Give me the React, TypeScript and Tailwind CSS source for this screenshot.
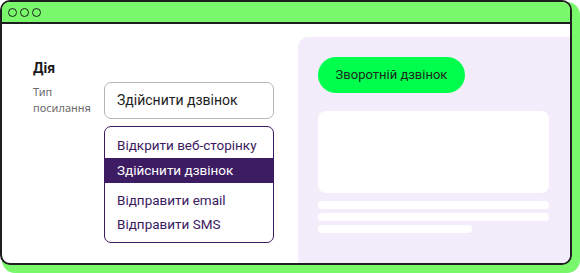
export default function App() {
  const options = [
    'Відкрити веб-сторінку',
    'Здійснити дзвінок',
    'Відправити email',
    'Відправити SMS',
  ];

  return (
    <div className="w-[580px] h-[273px] bg-white" style={{ fontFamily: 'Roboto, "Noto Sans", sans-serif' }}>
      <div className="flex flex-col w-[572px] h-[265px] border-2 border-[#1e1e1e] rounded-[10px] overflow-hidden bg-white shadow-[5px_5px_0_3px_#78f86a]">
        {/* title bar */}
        <div className="flex items-center gap-[3px] h-[22px] shrink-0 pl-[6px] bg-[#78f86a] border-b-2 border-[#1e1e1e]">
          <span className="w-[9px] h-[9px] rounded-full border-[1.5px] border-[#1e1e1e]"></span>
          <span className="w-[9px] h-[9px] rounded-full border-[1.5px] border-[#1e1e1e]"></span>
          <span className="w-[9px] h-[9px] rounded-full border-[1.5px] border-[#1e1e1e]"></span>
        </div>

        <div className="flex flex-1">
          {/* settings */}
          <div className="w-[296px] shrink-0 pl-[31px] pt-[34px]">
            <div className="text-[14px] leading-[20px] font-bold text-[#1a1a1a] mb-[4px]">Дія</div>
            <div className="flex">
              <div className="w-[71px] pt-[2px] text-[11px] leading-[16px] text-[#6b6b6b]" style={{ fontFamily: '"Noto Sans", sans-serif' }}>
                Тип
                <br />
                посилання
              </div>
              <div className="w-[170px]">
                <div className="flex items-center h-[37px] pl-[12px] border border-[#b5b5b5] rounded-[7px] text-[14px] text-[#1e1e1e]">
                  Здійснити дзвінок
                </div>
                <div className="mt-[7px] py-[6px] border border-[#3b1a5f] rounded-[7px] text-[13.5px] text-[#3b1a5f]">
                  <div className="flex items-center h-[25px] pl-[12px]">{options[0]}</div>
                  <div className="flex items-center h-[25px] pl-[12px] bg-[#3d1c64] text-white">{options[1]}</div>
                  <div className="flex items-center h-[24px] pl-[12px] mt-[5px]">{options[2]}</div>
                  <div className="flex items-center h-[24px] pl-[12px]">{options[3]}</div>
                </div>
              </div>
            </div>
          </div>

          {/* preview */}
          <div className="flex-1 mt-[13px] bg-[#f3ecfa] rounded-tl-[10px] pl-[20px] pr-[21px] pt-[20px]">
            <div className="flex items-center justify-center w-[147px] h-[36px] rounded-full bg-[#00ff4c] text-[13px] text-[#1a2a1e]">
              Зворотній дзвінок
            </div>
            <div className="mt-[18px] h-[82px] rounded-[8px] bg-white"></div>
            <div className="flex flex-col gap-[4px] mt-[8px]">
              <div className="h-[8px] rounded-full bg-white"></div>
              <div className="h-[8px] rounded-full bg-white"></div>
              <div className="h-[8px] w-[154px] rounded-full bg-white"></div>
            </div>
          </div>
        </div>
      </div>
    </div>
  );
}
